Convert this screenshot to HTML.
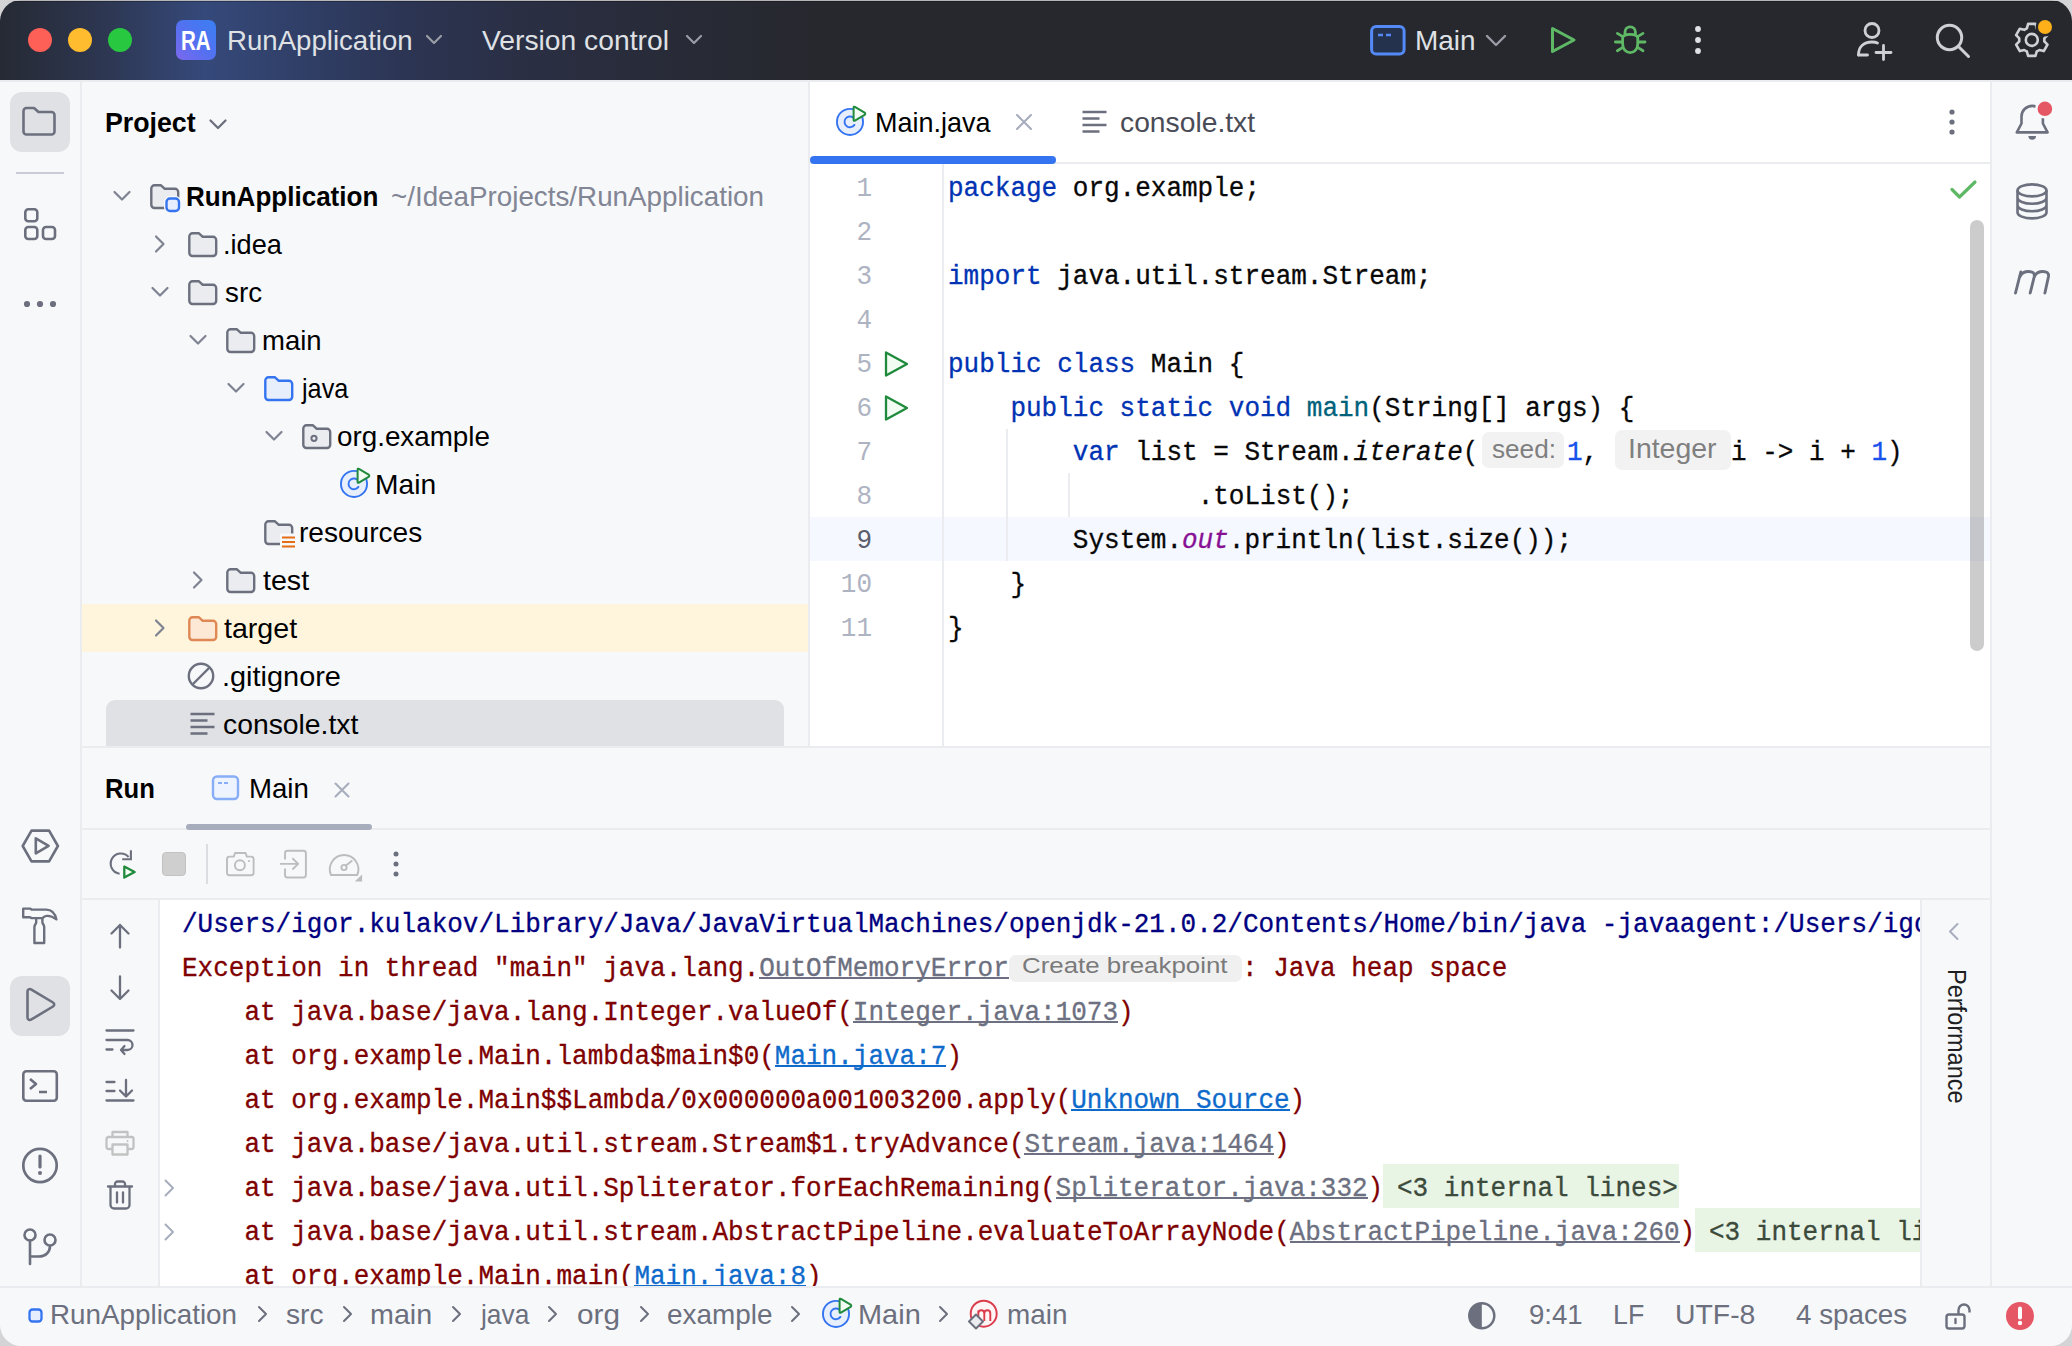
<!DOCTYPE html>
<html><head><meta charset="utf-8"><title>IDE</title>
<style>
*{box-sizing:border-box;margin:0;padding:0}
html,body{width:2072px;height:1346px;overflow:hidden;background:#d4d4d6}
body{font-family:"Liberation Sans",sans-serif;position:relative}
.a{position:absolute}
.win{position:absolute;left:0;top:0;width:2072px;height:1346px;border-radius:21px;overflow:hidden;background:#f7f8fa}
.t{position:absolute;white-space:pre;line-height:1}
svg{position:absolute;overflow:visible}
</style></head><body>
<div class="win">
<div class="a" style="left:0;top:1px;width:2072px;height:79px;background:linear-gradient(90deg,#262a34 0px,#2d3650 100px,#35497a 205px,#31416b 280px,#2c3554 400px,#2a2f44 520px,#282b38 660px,#27282e 820px)"></div>
<div class="a" style="left:0px;top:0px;width:2072px;height:1px;background:#b6b6b8;"></div>
<div class="a" style="left:0px;top:1px;width:2072px;height:1px;background:rgba(0,0,0,0.25);"></div>
<div class="a" style="left:28px;top:28px;width:24px;height:24px;background:#fe5f57;border-radius:50%"></div>
<div class="a" style="left:68px;top:28px;width:24px;height:24px;background:#febc2e;border-radius:50%"></div>
<div class="a" style="left:108px;top:28px;width:24px;height:24px;background:#28c840;border-radius:50%"></div>
<div class="a" style="left:176px;top:20px;width:40px;height:40px;background:linear-gradient(45deg,#7c68ee 0%,#5271f1 50%,#3a7ff2 100%);border-radius:7px"></div>
<div class="t" style="left:180.60px;top:28.00px;font-size:27px;color:#ffffff;font-family:'Liberation Sans',sans-serif;font-weight:700;transform:scaleX(0.7627);transform-origin:0 0;">RA</div>
<div class="t" style="left:227.03px;top:27.00px;font-size:28px;color:#dfe1e5;font-family:'Liberation Sans',sans-serif;transform:scaleX(0.9859);transform-origin:0 0;">RunApplication</div>
<svg style="left:425px;top:34px" width="18" height="11" viewBox="0 0 18 11"><path d="M2 2 L9 9 L16 2" fill="none" stroke="#9a9da5" stroke-width="2.2" stroke-linecap="round" stroke-linejoin="round"/></svg>
<div class="t" style="left:481.90px;top:27.00px;font-size:28px;color:#dfe1e5;font-family:'Liberation Sans',sans-serif;transform:scaleX(1.0093);transform-origin:0 0;">Version control</div>
<svg style="left:685px;top:34px" width="18" height="11" viewBox="0 0 18 11"><path d="M2 2 L9 9 L16 2" fill="none" stroke="#9a9da5" stroke-width="2.2" stroke-linecap="round" stroke-linejoin="round"/></svg>
<svg style="left:1370px;top:25px" width="36" height="31" viewBox="0 0 36 31"><rect x="1.6" y="1.6" width="32.5" height="27.5" rx="4.5" fill="#25324d" stroke="#548af7" stroke-width="3"/><path d="M8 10h5M16 10h5" stroke="#548af7" stroke-width="2.6"/></svg>
<div class="t" style="left:1415.00px;top:27.00px;font-size:28px;color:#dfe1e5;font-family:'Liberation Sans',sans-serif;transform:scaleX(0.9982);transform-origin:0 0;">Main</div>
<svg style="left:1485px;top:34px" width="22" height="13" viewBox="0 0 22 13"><path d="M2 2 L11 11 L20 2" fill="none" stroke="#9a9da5" stroke-width="2.4" stroke-linecap="round" stroke-linejoin="round"/></svg>
<svg style="left:1549px;top:25px" width="28" height="30" viewBox="0 0 28 30"><path d="M3.5 3.5 L25 15 L3.5 26.5 Z" fill="none" stroke="#5fb865" stroke-width="3" stroke-linejoin="round"/></svg>
<svg style="left:1606px;top:18px" width="50" height="44" viewBox="0 0 50 44"><g fill="none" stroke="#5fb865" stroke-width="2.8" stroke-linecap="round" stroke-linejoin="round"><path d="M16.6 20.5 C16.6 16.8 19.8 16.3 24.2 16.3 C28.6 16.3 31.8 16.8 31.8 20.5 V25.5 C31.8 31 28.5 34.6 24.2 34.6 C19.9 34.6 16.6 31 16.6 25.5 Z"/><path d="M19 16.6 V14 A5.2 5.2 0 0 1 29.4 14 V16.6"/><path d="M9.4 24H16.4M32 24H39M11.4 15.4 L16.4 18.4M37 15.4 L32 18.4M11.4 32.7 L16.4 29.6M37 32.7 L32 29.6"/></g></svg>
<svg style="left:1690px;top:24px" width="16" height="32" viewBox="0 0 16 32"><circle cx="8" cy="5" r="2.9" fill="#dfe1e5"/><circle cx="8" cy="16" r="2.9" fill="#dfe1e5"/><circle cx="8" cy="27" r="2.9" fill="#dfe1e5"/></svg>
<svg style="left:1855px;top:21px" width="40" height="40" viewBox="0 0 40 40"><g fill="none" stroke="#ced0d6" stroke-width="2.8" stroke-linecap="round"><circle cx="17" cy="9.5" r="7"/><path d="M3.5 34 c0-8 5-13 13.5-13 c2.2 0 4 0.3 5.5 1"/><path d="M3.5 34h9"/><path d="M28.5 24.5v14M21 31.5h15"/></g></svg>
<svg style="left:1934px;top:22px" width="40" height="40" viewBox="0 0 40 40"><g fill="none" stroke="#ced0d6" stroke-width="3" stroke-linecap="round"><circle cx="15.5" cy="15.5" r="12.2"/><path d="M25 25 L34.5 34.5"/></g></svg>
<svg style="left:2012px;top:0px" width="48" height="60" viewBox="0 0 48 60"><path d="M16.11 23.92L23.49 23.92L24.72 28.30Q26.10 28.99 27.38 29.84L31.79 28.72L35.48 35.11L32.31 38.36Q32.40 39.90 32.31 41.44L35.48 44.69L31.79 51.08L27.38 49.96Q26.10 50.81 24.72 51.50L23.49 55.88L16.11 55.88L14.88 51.50Q13.50 50.81 12.22 49.96L7.81 51.08L4.12 44.69L7.29 41.44Q7.20 39.90 7.29 38.36L4.12 35.11L7.81 28.72L12.22 29.84Q13.50 28.99 14.88 28.30L16.11 23.92Z" fill="none" stroke="#ced0d6" stroke-width="2.6" stroke-linejoin="round"/><circle cx="19.8" cy="39.9" r="6" fill="none" stroke="#ced0d6" stroke-width="2.6"/><circle cx="33" cy="27" r="9.5" fill="#27282e"/><circle cx="33" cy="27" r="7" fill="#fdb01a"/></svg>
<div class="a" style="left:0px;top:80px;width:2072px;height:2px;background:#ebecf0;"></div>
<div class="a" style="left:80px;top:80px;width:2px;height:1207px;background:#ebecf0;"></div>
<div class="a" style="left:808px;top:82px;width:2px;height:665px;background:#ebecf0;"></div>
<div class="a" style="left:810px;top:82px;width:1180px;height:665px;background:#ffffff;"></div>
<div class="a" style="left:1990px;top:80px;width:2px;height:1207px;background:#ebecf0;"></div>
<div class="a" style="left:82px;top:746px;width:1908px;height:2px;background:#ebecf0;"></div>
<div class="a" style="left:82px;top:828px;width:1908px;height:2px;background:#ebecf0;"></div>
<div class="a" style="left:82px;top:898px;width:1908px;height:2px;background:#ebecf0;"></div>
<div class="a" style="left:158px;top:900px;width:2px;height:387px;background:#ebecf0;"></div>
<div class="a" style="left:160px;top:900px;width:1760px;height:387px;background:#ffffff;"></div>
<div class="a" style="left:1920px;top:900px;width:2px;height:387px;background:#ebecf0;"></div>
<div class="a" style="left:0px;top:1286px;width:2072px;height:2px;background:#ebecf0;"></div>
<div class="a" style="left:810px;top:162px;width:1180px;height:2px;background:#ebecf0;"></div>
<div class="a" style="left:10px;top:92px;width:60px;height:60px;background:#dfe1e5;border-radius:12px"></div>
<svg style="left:20px;top:105px" width="40" height="36" viewBox="0 0 40 36"><path d="M3.5 6 a3 3 0 0 1 3-3 h7.5 l4.5 4 h13 a3 3 0 0 1 3 3 v16.5 a3 3 0 0 1 -3 3 h-25 a3 3 0 0 1 -3 -3 z" fill="none" stroke="#6c707e" stroke-width="2.6" stroke-linejoin="round"/></svg>
<div class="a" style="left:16px;top:172px;width:48px;height:2px;background:#c9ccd6;"></div>
<svg style="left:22px;top:206px" width="36" height="36" viewBox="0 0 36 36"><g fill="none" stroke="#6c707e" stroke-width="2.6"><rect x="3.3" y="3.3" width="12" height="12" rx="3"/><rect x="3.3" y="21" width="12" height="12" rx="3"/><rect x="21" y="21" width="12" height="12" rx="3"/></g></svg>
<svg style="left:20px;top:296px" width="40" height="16" viewBox="0 0 40 16"><circle cx="7" cy="8" r="3.1" fill="#6c707e"/><circle cx="20" cy="8" r="3.1" fill="#6c707e"/><circle cx="33" cy="8" r="3.1" fill="#6c707e"/></svg>
<svg style="left:20px;top:826px" width="40" height="40" viewBox="0 0 40 40"><g fill="none" stroke="#6c707e" stroke-width="2.6" stroke-linejoin="round"><path d="M11.5 4.6h17.6l8.8 15.4-8.8 15.4h-17.6l-8.8-15.4z"/><path d="M15.8 12.3 L28.6 19.8 L15.8 27.3z"/></g></svg>
<svg style="left:20px;top:904px" width="40" height="42" viewBox="0 0 40 42"><g fill="none" stroke="#6c707e" stroke-width="2.4" stroke-linejoin="round"><path d="M3.2 4.6H10L11.5 5.6H26.2C31 5.6 35 9 36.4 15.4C33 12.8 29.5 11.6 26.7 11.9C25 12.1 23.5 13.1 22.4 14.1H11.5L10 13.3H3.2Z"/><path d="M16.2 14.1V18.5C16.2 19.5 14.4 21 14.4 23V39H24.2V23C24.2 21 22.4 19.5 22.4 18.5V14.1"/></g></svg>
<div class="a" style="left:10px;top:976px;width:60px;height:60px;background:#dfe1e5;border-radius:12px"></div>
<svg style="left:20px;top:986px" width="40" height="40" viewBox="0 0 40 40"><path d="M7.5 5.5 c0-2 2-3 3.5-2.2 L33 16.5 c1.6 1 1.6 3 0 4 L11 33.7 c-1.5 0.8-3.5-0.2-3.5-2.2z" fill="none" stroke="#6c707e" stroke-width="2.6" stroke-linejoin="round"/></svg>
<svg style="left:20px;top:1068px" width="40" height="36" viewBox="0 0 40 36"><g fill="none" stroke="#6c707e" stroke-width="2.6" stroke-linejoin="round"><rect x="3.3" y="3.3" width="33.5" height="29.5" rx="3"/><path d="M10 11l6 5 -6 5M19 24h8"/></g></svg>
<svg style="left:20px;top:1145px" width="40" height="40" viewBox="0 0 40 40"><circle cx="20" cy="20.5" r="16.7" fill="none" stroke="#6c707e" stroke-width="2.7"/><path d="M20 11v11" stroke="#6c707e" stroke-width="3.2" stroke-linecap="round"/><circle cx="20" cy="28" r="2" fill="#6c707e"/></svg>
<svg style="left:20px;top:1226px" width="40" height="40" viewBox="0 0 40 40"><g fill="none" stroke="#6c707e" stroke-width="2.6" stroke-linecap="round"><circle cx="10" cy="9" r="5.5"/><circle cx="30" cy="14" r="5.5"/><path d="M10 14.5v23.5M10 30.5h9c6 0 11-4 11-10.5"/></g></svg>
<div class="t" style="left:105.19px;top:109.00px;font-size:28px;color:#000000;font-family:'Liberation Sans',sans-serif;font-weight:700;transform:scaleX(0.9547);transform-origin:0 0;">Project</div>
<svg style="left:208px;top:118px" width="20" height="13" viewBox="0 0 20 13"><path d="M2.5 2.5 L10 10 L17.5 2.5" fill="none" stroke="#6c707e" stroke-width="2.3" stroke-linecap="round" stroke-linejoin="round"/></svg>
<div class="a" style="left:82px;top:604px;width:726px;height:48px;background:#fff5dc;"></div>
<div class="a" style="left:106px;top:700px;width:678px;height:46px;background:#dfe1e5;border-radius:9px 9px 0 0"></div>
<svg style="left:112px;top:189px" width="20" height="14" viewBox="0 0 20 14"><path d="M2.5 3 L10 10.5 L17.5 3" fill="none" stroke="#7f8391" stroke-width="2.2" stroke-linecap="round" stroke-linejoin="round"/></svg>
<svg style="left:150px;top:184px" width="30" height="26" viewBox="0 0 30 26"><path d="M1.3 4.5 a3.2 3.2 0 0 1 3.2-3.2 h6.5 l3.8 3.5 h10.2 a3.2 3.2 0 0 1 3.2 3.2 v12.8 a3.2 3.2 0 0 1 -3.2 3.2 h-20.5 a3.2 3.2 0 0 1 -3.2 -3.2 z" fill="#ebecf0" stroke="#6c707e" stroke-width="2.4" stroke-linejoin="round"/></svg>
<svg style="left:164px;top:196px" width="18" height="18" viewBox="0 0 18 18"><rect x="2.5" y="2.5" width="12.5" height="12.5" rx="3.5" fill="#e6eefe" stroke="#f7f8fa" stroke-width="5"/><rect x="2.5" y="2.5" width="12.5" height="12.5" rx="3.5" fill="#e6eefe" stroke="#3574f0" stroke-width="2.4"/></svg>
<div class="t" style="left:186.03px;top:183.00px;font-size:28px;color:#000000;font-family:'Liberation Sans',sans-serif;font-weight:700;transform:scaleX(0.9297);transform-origin:0 0;">RunApplication</div>
<div class="t" style="left:390.61px;top:183.00px;font-size:28px;color:#818594;font-family:'Liberation Sans',sans-serif;transform:scaleX(0.9922);transform-origin:0 0;">~/IdeaProjects/RunApplication</div>
<svg style="left:153px;top:234px" width="14" height="20" viewBox="0 0 14 20"><path d="M3 2.5 L10.5 10 L3 17.5" fill="none" stroke="#7f8391" stroke-width="2.2" stroke-linecap="round" stroke-linejoin="round"/></svg>
<svg style="left:188px;top:232px" width="30" height="26" viewBox="0 0 30 26"><path d="M1.3 4.5 a3.2 3.2 0 0 1 3.2-3.2 h6.5 l3.8 3.5 h10.2 a3.2 3.2 0 0 1 3.2 3.2 v12.8 a3.2 3.2 0 0 1 -3.2 3.2 h-20.5 a3.2 3.2 0 0 1 -3.2 -3.2 z" fill="#ebecf0" stroke="#6c707e" stroke-width="2.4" stroke-linejoin="round"/></svg>
<div class="t" style="left:223.07px;top:231.00px;font-size:28px;color:#000000;font-family:'Liberation Sans',sans-serif;transform:scaleX(0.9708);transform-origin:0 0;">.idea</div>
<svg style="left:150px;top:285px" width="20" height="14" viewBox="0 0 20 14"><path d="M2.5 3 L10 10.5 L17.5 3" fill="none" stroke="#7f8391" stroke-width="2.2" stroke-linecap="round" stroke-linejoin="round"/></svg>
<svg style="left:188px;top:280px" width="30" height="26" viewBox="0 0 30 26"><path d="M1.3 4.5 a3.2 3.2 0 0 1 3.2-3.2 h6.5 l3.8 3.5 h10.2 a3.2 3.2 0 0 1 3.2 3.2 v12.8 a3.2 3.2 0 0 1 -3.2 3.2 h-20.5 a3.2 3.2 0 0 1 -3.2 -3.2 z" fill="#ebecf0" stroke="#6c707e" stroke-width="2.4" stroke-linejoin="round"/></svg>
<div class="t" style="left:224.71px;top:279.00px;font-size:28px;color:#000000;font-family:'Liberation Sans',sans-serif;transform:scaleX(0.9916);transform-origin:0 0;">src</div>
<svg style="left:188px;top:333px" width="20" height="14" viewBox="0 0 20 14"><path d="M2.5 3 L10 10.5 L17.5 3" fill="none" stroke="#7f8391" stroke-width="2.2" stroke-linecap="round" stroke-linejoin="round"/></svg>
<svg style="left:226px;top:328px" width="30" height="26" viewBox="0 0 30 26"><path d="M1.3 4.5 a3.2 3.2 0 0 1 3.2-3.2 h6.5 l3.8 3.5 h10.2 a3.2 3.2 0 0 1 3.2 3.2 v12.8 a3.2 3.2 0 0 1 -3.2 3.2 h-20.5 a3.2 3.2 0 0 1 -3.2 -3.2 z" fill="#ebecf0" stroke="#6c707e" stroke-width="2.4" stroke-linejoin="round"/></svg>
<div class="t" style="left:261.63px;top:327.00px;font-size:28px;color:#000000;font-family:'Liberation Sans',sans-serif;transform:scaleX(0.9825);transform-origin:0 0;">main</div>
<svg style="left:226px;top:381px" width="20" height="14" viewBox="0 0 20 14"><path d="M2.5 3 L10 10.5 L17.5 3" fill="none" stroke="#7f8391" stroke-width="2.2" stroke-linecap="round" stroke-linejoin="round"/></svg>
<svg style="left:264px;top:376px" width="30" height="26" viewBox="0 0 30 26"><path d="M1.3 4.5 a3.2 3.2 0 0 1 3.2-3.2 h6.5 l3.8 3.5 h10.2 a3.2 3.2 0 0 1 3.2 3.2 v12.8 a3.2 3.2 0 0 1 -3.2 3.2 h-20.5 a3.2 3.2 0 0 1 -3.2 -3.2 z" fill="#e7effd" stroke="#3574f0" stroke-width="2.4" stroke-linejoin="round"/></svg>
<div class="t" style="left:301.63px;top:375.00px;font-size:28px;color:#000000;font-family:'Liberation Sans',sans-serif;transform:scaleX(0.9021);transform-origin:0 0;">java</div>
<svg style="left:264px;top:429px" width="20" height="14" viewBox="0 0 20 14"><path d="M2.5 3 L10 10.5 L17.5 3" fill="none" stroke="#7f8391" stroke-width="2.2" stroke-linecap="round" stroke-linejoin="round"/></svg>
<svg style="left:302px;top:424px" width="30" height="26" viewBox="0 0 30 26"><path d="M1.3 4.5 a3.2 3.2 0 0 1 3.2-3.2 h6.5 l3.8 3.5 h10.2 a3.2 3.2 0 0 1 3.2 3.2 v12.8 a3.2 3.2 0 0 1 -3.2 3.2 h-20.5 a3.2 3.2 0 0 1 -3.2 -3.2 z" fill="#ebecf0" stroke="#6c707e" stroke-width="2.4" stroke-linejoin="round"/></svg>
<svg style="left:302px;top:424px" width="30" height="26" viewBox="0 0 30 26"><circle cx="12" cy="14.3" r="2.6" fill="none" stroke="#6c707e" stroke-width="2"/></svg>
<div class="t" style="left:337.31px;top:423.00px;font-size:28px;color:#000000;font-family:'Liberation Sans',sans-serif;transform:scaleX(0.9927);transform-origin:0 0;">org.example</div>
<svg style="left:339px;top:466px" width="32" height="32" viewBox="0 0 32 32"><circle cx="15" cy="17.9" r="13.05" fill="#e7effd" stroke="#3574f0" stroke-width="1.9"/><path d="M19.4 20.9 A5.4 5.4 0 1 1 18.4 13.7" fill="none" stroke="#3574f0" stroke-width="1.9" stroke-linecap="round"/><path d="M18.6 3.6 Q18.6 2.2 19.9 2.9 L29.6 8.6 Q30.9 9.75 29.6 10.9 L19.9 16.6 Q18.6 17.3 18.6 15.9z" fill="#f2fcf3" stroke="#208a3c" stroke-width="2" stroke-linejoin="round"/></svg>
<div class="t" style="left:374.68px;top:471.00px;font-size:28px;color:#000000;font-family:'Liberation Sans',sans-serif;transform:scaleX(1.0071);transform-origin:0 0;">Main</div>
<svg style="left:264px;top:520px" width="30" height="26" viewBox="0 0 30 26"><path d="M1.3 4.5 a3.2 3.2 0 0 1 3.2-3.2 h6.5 l3.8 3.5 h10.2 a3.2 3.2 0 0 1 3.2 3.2 v12.8 a3.2 3.2 0 0 1 -3.2 3.2 h-20.5 a3.2 3.2 0 0 1 -3.2 -3.2 z" fill="#ebecf0" stroke="#6c707e" stroke-width="2.4" stroke-linejoin="round"/></svg>
<svg style="left:264px;top:520px" width="34" height="30" viewBox="0 0 34 30"><rect x="16" y="13.5" width="17" height="14" fill="#f7f8fa"/><path d="M18 17.5h13M18 22h13M18 26.5h13" stroke="#e66d17" stroke-width="2.2"/></svg>
<div class="t" style="left:298.80px;top:519.00px;font-size:28px;color:#000000;font-family:'Liberation Sans',sans-serif;transform:scaleX(1.0025);transform-origin:0 0;">resources</div>
<svg style="left:191px;top:570px" width="14" height="20" viewBox="0 0 14 20"><path d="M3 2.5 L10.5 10 L3 17.5" fill="none" stroke="#7f8391" stroke-width="2.2" stroke-linecap="round" stroke-linejoin="round"/></svg>
<svg style="left:226px;top:568px" width="30" height="26" viewBox="0 0 30 26"><path d="M1.3 4.5 a3.2 3.2 0 0 1 3.2-3.2 h6.5 l3.8 3.5 h10.2 a3.2 3.2 0 0 1 3.2 3.2 v12.8 a3.2 3.2 0 0 1 -3.2 3.2 h-20.5 a3.2 3.2 0 0 1 -3.2 -3.2 z" fill="#ebecf0" stroke="#6c707e" stroke-width="2.4" stroke-linejoin="round"/></svg>
<div class="t" style="left:262.59px;top:567.00px;font-size:28px;color:#000000;font-family:'Liberation Sans',sans-serif;transform:scaleX(1.0224);transform-origin:0 0;">test</div>
<svg style="left:153px;top:618px" width="14" height="20" viewBox="0 0 14 20"><path d="M3 2.5 L10.5 10 L3 17.5" fill="none" stroke="#7f8391" stroke-width="2.2" stroke-linecap="round" stroke-linejoin="round"/></svg>
<svg style="left:188px;top:616px" width="30" height="26" viewBox="0 0 30 26"><path d="M1.3 4.5 a3.2 3.2 0 0 1 3.2-3.2 h6.5 l3.8 3.5 h10.2 a3.2 3.2 0 0 1 3.2 3.2 v12.8 a3.2 3.2 0 0 1 -3.2 3.2 h-20.5 a3.2 3.2 0 0 1 -3.2 -3.2 z" fill="#fde8d6" stroke="#e08855" stroke-width="2.4" stroke-linejoin="round"/></svg>
<div class="t" style="left:224.19px;top:615.00px;font-size:28px;color:#000000;font-family:'Liberation Sans',sans-serif;transform:scaleX(1.0211);transform-origin:0 0;">target</div>
<svg style="left:186px;top:661px" width="32" height="32" viewBox="0 0 32 32"><circle cx="15" cy="15" r="12.2" fill="none" stroke="#6c707e" stroke-width="2.4"/><path d="M7 23 L23 7" stroke="#6c707e" stroke-width="2.4"/></svg>
<div class="t" style="left:222.02px;top:663.00px;font-size:28px;color:#000000;font-family:'Liberation Sans',sans-serif;transform:scaleX(1.0323);transform-origin:0 0;">.gitignore</div>
<svg style="left:188px;top:710px" width="30" height="28" viewBox="0 0 30 28"><path d="M2.5 4h24M2.5 10.5h17M2.5 17h24M2.5 23.5h17" stroke="#6c707e" stroke-width="2.4"/></svg>
<div class="t" style="left:223.39px;top:711.00px;font-size:28px;color:#000000;font-family:'Liberation Sans',sans-serif;transform:scaleX(1.0113);transform-origin:0 0;">console.txt</div>
<svg style="left:835px;top:104px" width="32" height="32" viewBox="0 0 32 32"><circle cx="15" cy="17.9" r="13.05" fill="#e7effd" stroke="#3574f0" stroke-width="1.9"/><path d="M19.4 20.9 A5.4 5.4 0 1 1 18.4 13.7" fill="none" stroke="#3574f0" stroke-width="1.9" stroke-linecap="round"/><path d="M18.6 3.6 Q18.6 2.2 19.9 2.9 L29.6 8.6 Q30.9 9.75 29.6 10.9 L19.9 16.6 Q18.6 17.3 18.6 15.9z" fill="#f2fcf3" stroke="#208a3c" stroke-width="2" stroke-linejoin="round"/></svg>
<div class="t" style="left:875.48px;top:109.00px;font-size:28px;color:#000000;font-family:'Liberation Sans',sans-serif;transform:scaleX(0.9634);transform-origin:0 0;">Main.java</div>
<svg style="left:1014px;top:112px" width="20" height="20" viewBox="0 0 20 20"><path d="M3 3 L17 17 M17 3 L3 17" stroke="#a8adbd" stroke-width="2.1" stroke-linecap="round"/></svg>
<svg style="left:1080px;top:108px" width="30" height="28" viewBox="0 0 30 28"><path d="M2.5 4h24M2.5 10.5h17M2.5 17h24M2.5 23.5h17" stroke="#6c707e" stroke-width="2.4"/></svg>
<div class="t" style="left:1119.79px;top:109.00px;font-size:28px;color:#494b57;font-family:'Liberation Sans',sans-serif;transform:scaleX(1.0091);transform-origin:0 0;">console.txt</div>
<div class="a" style="left:810px;top:156px;width:246px;height:8px;background:#3574f0;border-radius:4px"></div>
<svg style="left:1940px;top:102px" width="24" height="40" viewBox="0 0 24 40"><circle cx="12" cy="10" r="2.6" fill="#6c707e"/><circle cx="12" cy="20" r="2.6" fill="#6c707e"/><circle cx="12" cy="30" r="2.6" fill="#6c707e"/></svg>
<div class="a" style="left:810px;top:517px;width:1180px;height:44px;background:#f5f8fe;"></div>
<div class="a" style="left:942px;top:164px;width:2px;height:583px;background:#ebecf0;"></div>
<div class="a" style="left:1006px;top:429px;width:2px;height:132px;background:#ebecf0;"></div>
<div class="a" style="left:1068px;top:473px;width:2px;height:44px;background:#ebecf0;"></div>
<div class="t" style="left:856.40px;top:176.00px;font-size:26px;color:#aeb3c2;font-family:'Liberation Mono',monospace;transform:scaleY(1.06);transform-origin:0 20px;-webkit-text-stroke:0px currentColor;">1</div>
<div class="t" style="left:856.40px;top:220.00px;font-size:26px;color:#aeb3c2;font-family:'Liberation Mono',monospace;transform:scaleY(1.06);transform-origin:0 20px;-webkit-text-stroke:0px currentColor;">2</div>
<div class="t" style="left:856.40px;top:264.00px;font-size:26px;color:#aeb3c2;font-family:'Liberation Mono',monospace;transform:scaleY(1.06);transform-origin:0 20px;-webkit-text-stroke:0px currentColor;">3</div>
<div class="t" style="left:856.40px;top:308.00px;font-size:26px;color:#aeb3c2;font-family:'Liberation Mono',monospace;transform:scaleY(1.06);transform-origin:0 20px;-webkit-text-stroke:0px currentColor;">4</div>
<div class="t" style="left:856.40px;top:352.00px;font-size:26px;color:#aeb3c2;font-family:'Liberation Mono',monospace;transform:scaleY(1.06);transform-origin:0 20px;-webkit-text-stroke:0px currentColor;">5</div>
<div class="t" style="left:856.40px;top:396.00px;font-size:26px;color:#aeb3c2;font-family:'Liberation Mono',monospace;transform:scaleY(1.06);transform-origin:0 20px;-webkit-text-stroke:0px currentColor;">6</div>
<div class="t" style="left:856.40px;top:440.00px;font-size:26px;color:#aeb3c2;font-family:'Liberation Mono',monospace;transform:scaleY(1.06);transform-origin:0 20px;-webkit-text-stroke:0px currentColor;">7</div>
<div class="t" style="left:856.40px;top:484.00px;font-size:26px;color:#aeb3c2;font-family:'Liberation Mono',monospace;transform:scaleY(1.06);transform-origin:0 20px;-webkit-text-stroke:0px currentColor;">8</div>
<div class="t" style="left:856.40px;top:528.00px;font-size:26px;color:#5a5d6b;font-family:'Liberation Mono',monospace;transform:scaleY(1.06);transform-origin:0 20px;-webkit-text-stroke:0px currentColor;">9</div>
<div class="t" style="left:840.80px;top:572.00px;font-size:26px;color:#aeb3c2;font-family:'Liberation Mono',monospace;transform:scaleY(1.06);transform-origin:0 20px;-webkit-text-stroke:0px currentColor;">10</div>
<div class="t" style="left:840.80px;top:616.00px;font-size:26px;color:#aeb3c2;font-family:'Liberation Mono',monospace;transform:scaleY(1.06);transform-origin:0 20px;-webkit-text-stroke:0px currentColor;">11</div>
<div class="t" style="left:948.00px;top:176.00px;font-size:26px;color:#0033b3;font-family:'Liberation Mono',monospace;transform:scaleY(1.06);transform-origin:0 20px;-webkit-text-stroke:0.3px currentColor;">package</div>
<div class="t" style="left:1057.20px;top:176.00px;font-size:26px;color:#080808;font-family:'Liberation Mono',monospace;transform:scaleY(1.06);transform-origin:0 20px;-webkit-text-stroke:0.3px currentColor;"> org.example;</div>
<div class="t" style="left:948.00px;top:264.00px;font-size:26px;color:#0033b3;font-family:'Liberation Mono',monospace;transform:scaleY(1.06);transform-origin:0 20px;-webkit-text-stroke:0.3px currentColor;">import</div>
<div class="t" style="left:1041.60px;top:264.00px;font-size:26px;color:#080808;font-family:'Liberation Mono',monospace;transform:scaleY(1.06);transform-origin:0 20px;-webkit-text-stroke:0.3px currentColor;"> java.util.stream.Stream;</div>
<div class="t" style="left:948.00px;top:352.00px;font-size:26px;color:#0033b3;font-family:'Liberation Mono',monospace;transform:scaleY(1.06);transform-origin:0 20px;-webkit-text-stroke:0.3px currentColor;">public</div>
<div class="t" style="left:1057.20px;top:352.00px;font-size:26px;color:#0033b3;font-family:'Liberation Mono',monospace;transform:scaleY(1.06);transform-origin:0 20px;-webkit-text-stroke:0.3px currentColor;">class</div>
<div class="t" style="left:1135.20px;top:352.00px;font-size:26px;color:#080808;font-family:'Liberation Mono',monospace;transform:scaleY(1.06);transform-origin:0 20px;-webkit-text-stroke:0.3px currentColor;"> Main {</div>
<div class="t" style="left:1010.40px;top:396.00px;font-size:26px;color:#0033b3;font-family:'Liberation Mono',monospace;transform:scaleY(1.06);transform-origin:0 20px;-webkit-text-stroke:0.3px currentColor;">public</div>
<div class="t" style="left:1119.60px;top:396.00px;font-size:26px;color:#0033b3;font-family:'Liberation Mono',monospace;transform:scaleY(1.06);transform-origin:0 20px;-webkit-text-stroke:0.3px currentColor;">static</div>
<div class="t" style="left:1228.80px;top:396.00px;font-size:26px;color:#0033b3;font-family:'Liberation Mono',monospace;transform:scaleY(1.06);transform-origin:0 20px;-webkit-text-stroke:0.3px currentColor;">void</div>
<div class="t" style="left:1306.80px;top:396.00px;font-size:26px;color:#00627a;font-family:'Liberation Mono',monospace;transform:scaleY(1.06);transform-origin:0 20px;-webkit-text-stroke:0.3px currentColor;">main</div>
<div class="t" style="left:1369.20px;top:396.00px;font-size:26px;color:#080808;font-family:'Liberation Mono',monospace;transform:scaleY(1.06);transform-origin:0 20px;-webkit-text-stroke:0.3px currentColor;">(String[] args) {</div>
<div class="t" style="left:1072.80px;top:440.00px;font-size:26px;color:#0033b3;font-family:'Liberation Mono',monospace;transform:scaleY(1.06);transform-origin:0 20px;-webkit-text-stroke:0.3px currentColor;">var</div>
<div class="t" style="left:1119.60px;top:440.00px;font-size:26px;color:#080808;font-family:'Liberation Mono',monospace;transform:scaleY(1.06);transform-origin:0 20px;-webkit-text-stroke:0.3px currentColor;"> list = Stream.</div>
<div class="t" style="left:1353.60px;top:440.00px;font-size:26px;color:#080808;font-family:'Liberation Mono',monospace;font-style:italic;transform:scaleY(1.06);transform-origin:0 20px;-webkit-text-stroke:0.3px currentColor;">iterate</div>
<div class="t" style="left:1462.80px;top:440.00px;font-size:26px;color:#080808;font-family:'Liberation Mono',monospace;transform:scaleY(1.06);transform-origin:0 20px;-webkit-text-stroke:0.3px currentColor;">(</div>
<div class="a" style="left:1482px;top:432px;width:82px;height:35.5px;background:#f2f2f3;border-radius:7px"></div>
<div class="t" style="left:1491.85px;top:437.00px;font-size:25px;color:#7f7f7f;font-family:'Liberation Sans',sans-serif;transform:scaleX(1.0460);transform-origin:0 0;">seed:</div>
<div class="t" style="left:1567.00px;top:440.00px;font-size:26px;color:#1750eb;font-family:'Liberation Mono',monospace;transform:scaleY(1.06);transform-origin:0 20px;-webkit-text-stroke:0.3px currentColor;">1</div>
<div class="t" style="left:1582.60px;top:440.00px;font-size:26px;color:#080808;font-family:'Liberation Mono',monospace;transform:scaleY(1.06);transform-origin:0 20px;-webkit-text-stroke:0.3px currentColor;">,</div>
<div class="a" style="left:1615px;top:430px;width:116px;height:40px;background:#f2f2f3;border-radius:7px"></div>
<div class="t" style="left:1627.86px;top:435.00px;font-size:28px;color:#7f7f7f;font-family:'Liberation Sans',sans-serif;transform:scaleX(1.0155);transform-origin:0 0;">Integer</div>
<div class="t" style="left:1731.00px;top:440.00px;font-size:26px;color:#080808;font-family:'Liberation Mono',monospace;transform:scaleY(1.06);transform-origin:0 20px;-webkit-text-stroke:0.3px currentColor;">i -&gt; i + </div>
<div class="t" style="left:1871.40px;top:440.00px;font-size:26px;color:#1750eb;font-family:'Liberation Mono',monospace;transform:scaleY(1.06);transform-origin:0 20px;-webkit-text-stroke:0.3px currentColor;">1</div>
<div class="t" style="left:1887.00px;top:440.00px;font-size:26px;color:#080808;font-family:'Liberation Mono',monospace;transform:scaleY(1.06);transform-origin:0 20px;-webkit-text-stroke:0.3px currentColor;">)</div>
<div class="t" style="left:948.00px;top:484.00px;font-size:26px;color:#080808;font-family:'Liberation Mono',monospace;transform:scaleY(1.06);transform-origin:0 20px;-webkit-text-stroke:0.3px currentColor;">                .toList();</div>
<div class="t" style="left:948.00px;top:528.00px;font-size:26px;color:#080808;font-family:'Liberation Mono',monospace;transform:scaleY(1.06);transform-origin:0 20px;-webkit-text-stroke:0.3px currentColor;">        System.</div>
<div class="t" style="left:1182.00px;top:528.00px;font-size:26px;color:#871094;font-family:'Liberation Mono',monospace;font-style:italic;transform:scaleY(1.06);transform-origin:0 20px;-webkit-text-stroke:0.3px currentColor;">out</div>
<div class="t" style="left:1228.80px;top:528.00px;font-size:26px;color:#080808;font-family:'Liberation Mono',monospace;transform:scaleY(1.06);transform-origin:0 20px;-webkit-text-stroke:0.3px currentColor;">.println(list.size());</div>
<div class="t" style="left:948.00px;top:572.00px;font-size:26px;color:#080808;font-family:'Liberation Mono',monospace;transform:scaleY(1.06);transform-origin:0 20px;-webkit-text-stroke:0.3px currentColor;">    }</div>
<div class="t" style="left:948.00px;top:616.00px;font-size:26px;color:#080808;font-family:'Liberation Mono',monospace;transform:scaleY(1.06);transform-origin:0 20px;-webkit-text-stroke:0.3px currentColor;">}</div>
<svg style="left:882px;top:349px" width="28" height="30" viewBox="0 0 28 30"><path d="M4 3.5 L25 15 L4 26.5z" fill="#f2fcf3" stroke="#208a3c" stroke-width="2.3" stroke-linejoin="round"/></svg>
<svg style="left:882px;top:393px" width="28" height="30" viewBox="0 0 28 30"><path d="M4 3.5 L25 15 L4 26.5z" fill="#f2fcf3" stroke="#208a3c" stroke-width="2.3" stroke-linejoin="round"/></svg>
<svg style="left:1948px;top:178px" width="32" height="24" viewBox="0 0 32 24"><path d="M4 11.5 L11.5 19 L27 4" fill="none" stroke="#5fb865" stroke-width="3.2" stroke-linecap="round" stroke-linejoin="round"/></svg>
<div class="a" style="left:1970px;top:220px;width:14px;height:431px;background:rgba(0,0,0,0.2);border-radius:7px"></div>
<svg style="left:2010px;top:98px" width="46" height="46" viewBox="0 0 46 46"><path d="M6.8 34.4 L11.5 25.5 V18.6 A10.7 10.7 0 0 1 32.9 18.6 V25.5 L37.6 34.4 Z" fill="none" stroke="#6c707e" stroke-width="2.6" stroke-linejoin="round"/><path d="M18.4 38 a3.8 3.8 0 0 0 7.6 0z" fill="#6c707e"/><circle cx="34.9" cy="10.8" r="9.8" fill="#f7f8fa"/><circle cx="34.9" cy="10.8" r="7.3" fill="#e55765"/></svg>
<svg style="left:2014px;top:182px" width="38" height="40" viewBox="0 0 38 40"><g fill="none" stroke="#6c707e" stroke-width="2.6"><ellipse cx="18" cy="8.4" rx="14.5" ry="6"/><path d="M3.5 8.4v22c0 3.3 6.5 6 14.5 6s14.5-2.7 14.5-6v-22M3.5 15.8c0 3.3 6.5 6 14.5 6s14.5-2.7 14.5-6M3.5 23.2c0 3.3 6.5 6 14.5 6s14.5-2.7 14.5-6"/></g></svg>
<svg style="left:2010px;top:266px" width="44" height="32" viewBox="0 0 44 32"><g fill="none" stroke="#6c707e" stroke-width="2.9" stroke-linecap="round" stroke-linejoin="round"><path d="M5.5 27 L10.8 6"/><path d="M10.3 10 C12 6.8 15 5.5 18.5 5.5 C22.5 5.5 24.8 7 24.3 10.5 L20.2 27"/><path d="M24.6 10 C26.3 6.8 29.3 5.5 32.8 5.5 C36.8 5.5 39 7 38.5 10.5 L34.9 27"/></g></svg>
<div class="t" style="left:105.46px;top:775.00px;font-size:28px;color:#000000;font-family:'Liberation Sans',sans-serif;font-weight:700;transform:scaleX(0.9154);transform-origin:0 0;">Run</div>
<svg style="left:210px;top:774px" width="32" height="28" viewBox="0 0 32 28"><rect x="3" y="2.5" width="25" height="22.5" rx="4" fill="#edf3ff" stroke="#88adf7" stroke-width="2.4"/><path d="M8 9h4M14 9h4" stroke="#88adf7" stroke-width="2.2"/></svg>
<div class="t" style="left:249.33px;top:775.00px;font-size:28px;color:#000000;font-family:'Liberation Sans',sans-serif;transform:scaleX(0.9859);transform-origin:0 0;">Main</div>
<svg style="left:332px;top:780px" width="20" height="20" viewBox="0 0 20 20"><path d="M3.5 3.5 L16.5 16.5 M16.5 3.5 L3.5 16.5" stroke="#a8adbd" stroke-width="2.1" stroke-linecap="round"/></svg>
<div class="a" style="left:186px;top:824px;width:186px;height:6px;background:#a8adbd;border-radius:3px"></div>
<svg style="left:100px;top:842px" width="44" height="44" viewBox="0 0 44 44"><g fill="none" stroke="#6c707e" stroke-width="2.1"><path d="M28.6 15 A10.2 10.2 0 1 0 19.6 31.8"/><path d="M30.9 8.2V17.2H22.2"/></g><path d="M24.3 24.6 L34.6 30.1 L24.3 35.6z" fill="#f2fcf3" stroke="#208a3c" stroke-width="2.3" stroke-linejoin="round"/></svg>
<div class="a" style="left:162px;top:852px;width:24px;height:24px;background:#cfcfcf;border-radius:4px;border:1.5px solid #c2c2c2"></div>
<div class="a" style="left:206px;top:844px;width:2px;height:40px;background:#dcdde1;"></div>
<svg style="left:220px;top:842px" width="150" height="46" viewBox="0 0 150 46"><g fill="none" stroke="#bdbdbd" stroke-width="1.9" stroke-linejoin="round" stroke-linecap="butt"><path d="M9.5 14.6h4.3l1.2-3.6h10.6l1.2 3.6h4.3a2.5 2.5 0 0 1 2.5 2.5v13.7a2.5 2.5 0 0 1-2.5 2.5h-21.6a2.5 2.5 0 0 1-2.5-2.5v-13.7a2.5 2.5 0 0 1 2.5-2.5z"/><circle cx="19.9" cy="23.3" r="5"/><path d="M65 17.4v-6.2a2.5 2.5 0 0 1 2.5-2.5h15.9a2.5 2.5 0 0 1 2.5 2.5v21.8a2.5 2.5 0 0 1-2.5 2.5h-15.9a2.5 2.5 0 0 1-2.5-2.5v-6.5"/><path d="M60 21.9h18.5M72.4 16.3l5.8 5.6-5.8 5.6"/><path d="M111 33 a14.3 14.3 0 1 1 26.2 0z"/><circle cx="124" cy="25.5" r="2.6"/><path d="M126 23.6l6.3-5"/></g><circle cx="29" cy="19" r="1.1" fill="#bdbdbd"/><path d="M134.7 39.6h7.4v-7z" fill="#bdbdbd"/></svg>
<svg style="left:388px;top:850px" width="16" height="28" viewBox="0 0 16 28"><circle cx="8" cy="4" r="2.5" fill="#6c707e"/><circle cx="8" cy="14" r="2.5" fill="#6c707e"/><circle cx="8" cy="24" r="2.5" fill="#6c707e"/></svg>
<svg style="left:106px;top:920px" width="28" height="32" viewBox="0 0 28 32"><g fill="none" stroke="#6c707e" stroke-width="2.3" stroke-linecap="round" stroke-linejoin="round"><path d="M14 27.5v-22.5M5.5 13.5l8.5-8.5 8.5 8.5"/></g></svg>
<svg style="left:106px;top:972px" width="28" height="32" viewBox="0 0 28 32"><g fill="none" stroke="#6c707e" stroke-width="2.3" stroke-linecap="round" stroke-linejoin="round"><path d="M14 4.5v22.5M5.5 18.5l8.5 8.5 8.5-8.5"/></g></svg>
<svg style="left:104px;top:1026px" width="32" height="32" viewBox="0 0 32 32"><g fill="none" stroke="#6c707e" stroke-width="2.3" stroke-linecap="round" stroke-linejoin="round"><path d="M2.5 4.5h27M2.5 14h21a5 5 0 0 1 0 10h-6M2.5 23.5h6M20.5 20l-3.5 4 3.5 4"/></g></svg>
<svg style="left:104px;top:1078px" width="32" height="28" viewBox="0 0 32 28"><g fill="none" stroke="#6c707e" stroke-width="2.3" stroke-linecap="round" stroke-linejoin="round"><path d="M2.5 4h8M2.5 13h8M2.5 22.5h27M22 2v16.5M16 12.5l6 6 6-6"/></g></svg>
<svg style="left:104px;top:1129px" width="32" height="30" viewBox="0 0 32 30"><g fill="none" stroke="#c2c2c2" stroke-width="2.3" stroke-linejoin="round"><path d="M8.5 8v-5h15v5"/><path d="M8.5 20h-4a2 2 0 0 1-2-2v-8a2 2 0 0 1 2-2h23a2 2 0 0 1 2 2v8a2 2 0 0 1-2 2h-4"/><path d="M8.5 15.5h15v10h-15z"/></g><circle cx="23.5" cy="12" r="1" fill="#c2c2c2"/></svg>
<svg style="left:104px;top:1179px" width="32" height="34" viewBox="0 0 32 34"><g fill="none" stroke="#6c707e" stroke-width="2.3" stroke-linecap="round" stroke-linejoin="round"><path d="M4 7.5h24M11 7.5v-2.5a2.5 2.5 0 0 1 2.5-2.5h5a2.5 2.5 0 0 1 2.5 2.5v2.5M6.5 7.5v18.5a3.5 3.5 0 0 0 3.5 3.5h12a3.5 3.5 0 0 0 3.5-3.5v-18.5M13 13.5v10M19 13.5v10"/></g></svg>
<svg style="left:162px;top:1178px" width="16" height="20" viewBox="0 0 16 20"><path d="M3.5 2.5 L11 10 L3.5 17.5" fill="none" stroke="#a8adbd" stroke-width="2" stroke-linecap="round" stroke-linejoin="round"/></svg>
<svg style="left:162px;top:1222px" width="16" height="20" viewBox="0 0 16 20"><path d="M3.5 2.5 L11 10 L3.5 17.5" fill="none" stroke="#a8adbd" stroke-width="2" stroke-linecap="round" stroke-linejoin="round"/></svg>
<div class="a" style="left:160px;top:900px;width:1760px;height:386px;overflow:hidden">
<div class="t" style="left:22.00px;top:12.00px;font-size:26px;color:#000080;font-family:'Liberation Mono',monospace;transform:scaleY(1.06);transform-origin:0 20px;-webkit-text-stroke:0.3px currentColor;">/Users/igor.kulakov/Library/Java/JavaVirtualMachines/openjdk-21.0.2/Contents/Home/bin/java -javaagent:/Users/igor.kulakov/Applications</div>
<div class="t" style="left:22.00px;top:56.00px;font-size:26px;color:#7f0000;font-family:'Liberation Mono',monospace;transform:scaleY(1.06);transform-origin:0 20px;-webkit-text-stroke:0.3px currentColor;">Exception in thread "main" java.lang.</div>
<div class="a" style="left:599.20px;top:77px;width:249.60px;height:2px;background:#6c7080;"></div>
<div class="t" style="left:599.20px;top:56.00px;font-size:26px;color:#6c7080;font-family:'Liberation Mono',monospace;transform:scaleY(1.06);transform-origin:0 20px;-webkit-text-stroke:0.3px currentColor;">OutOfMemoryError</div>
<div class="a" style="left:848.5px;top:54.5px;width:233.5px;height:27px;background:#f0f0f1;border-radius:7px"></div>
<div class="t" style="left:861.71px;top:55.00px;font-size:22px;color:#7a7a7a;font-family:'Liberation Sans',sans-serif;transform:scaleX(1.1748);transform-origin:0 0;">Create breakpoint</div>
<div class="t" style="left:1082.00px;top:56.00px;font-size:26px;color:#7f0000;font-family:'Liberation Mono',monospace;transform:scaleY(1.06);transform-origin:0 20px;-webkit-text-stroke:0.3px currentColor;">: Java heap space</div>
<div class="t" style="left:22.00px;top:100.00px;font-size:26px;color:#7f0000;font-family:'Liberation Mono',monospace;transform:scaleY(1.06);transform-origin:0 20px;-webkit-text-stroke:0.3px currentColor;">    at java.base/java.lang.Integer.valueOf(</div>
<div class="a" style="left:692.80px;top:121px;width:265.20px;height:2px;background:#6c7080;"></div>
<div class="t" style="left:692.80px;top:100.00px;font-size:26px;color:#6c7080;font-family:'Liberation Mono',monospace;transform:scaleY(1.06);transform-origin:0 20px;-webkit-text-stroke:0.3px currentColor;">Integer.java:1073</div>
<div class="t" style="left:958.00px;top:100.00px;font-size:26px;color:#7f0000;font-family:'Liberation Mono',monospace;transform:scaleY(1.06);transform-origin:0 20px;-webkit-text-stroke:0.3px currentColor;">)</div>
<div class="t" style="left:22.00px;top:144.00px;font-size:26px;color:#7f0000;font-family:'Liberation Mono',monospace;transform:scaleY(1.06);transform-origin:0 20px;-webkit-text-stroke:0.3px currentColor;">    at org.example.Main.lambda$main$0(</div>
<div class="a" style="left:614.80px;top:165px;width:171.60px;height:2px;background:#0f6bcb;"></div>
<div class="t" style="left:614.80px;top:144.00px;font-size:26px;color:#0f6bcb;font-family:'Liberation Mono',monospace;transform:scaleY(1.06);transform-origin:0 20px;-webkit-text-stroke:0.3px currentColor;">Main.java:7</div>
<div class="t" style="left:786.40px;top:144.00px;font-size:26px;color:#7f0000;font-family:'Liberation Mono',monospace;transform:scaleY(1.06);transform-origin:0 20px;-webkit-text-stroke:0.3px currentColor;">)</div>
<div class="t" style="left:22.00px;top:188.00px;font-size:26px;color:#7f0000;font-family:'Liberation Mono',monospace;transform:scaleY(1.06);transform-origin:0 20px;-webkit-text-stroke:0.3px currentColor;">    at org.example.Main$$Lambda/0x000000a001003200.apply(</div>
<div class="a" style="left:911.20px;top:209px;width:218.40px;height:2px;background:#0f6bcb;"></div>
<div class="t" style="left:911.20px;top:188.00px;font-size:26px;color:#0f6bcb;font-family:'Liberation Mono',monospace;transform:scaleY(1.06);transform-origin:0 20px;-webkit-text-stroke:0.3px currentColor;">Unknown Source</div>
<div class="t" style="left:1129.60px;top:188.00px;font-size:26px;color:#7f0000;font-family:'Liberation Mono',monospace;transform:scaleY(1.06);transform-origin:0 20px;-webkit-text-stroke:0.3px currentColor;">)</div>
<div class="t" style="left:22.00px;top:232.00px;font-size:26px;color:#7f0000;font-family:'Liberation Mono',monospace;transform:scaleY(1.06);transform-origin:0 20px;-webkit-text-stroke:0.3px currentColor;">    at java.base/java.util.stream.Stream$1.tryAdvance(</div>
<div class="a" style="left:864.40px;top:253px;width:249.60px;height:2px;background:#6c7080;"></div>
<div class="t" style="left:864.40px;top:232.00px;font-size:26px;color:#6c7080;font-family:'Liberation Mono',monospace;transform:scaleY(1.06);transform-origin:0 20px;-webkit-text-stroke:0.3px currentColor;">Stream.java:1464</div>
<div class="t" style="left:1114.00px;top:232.00px;font-size:26px;color:#7f0000;font-family:'Liberation Mono',monospace;transform:scaleY(1.06);transform-origin:0 20px;-webkit-text-stroke:0.3px currentColor;">)</div>
<div class="t" style="left:22.00px;top:276.00px;font-size:26px;color:#7f0000;font-family:'Liberation Mono',monospace;transform:scaleY(1.06);transform-origin:0 20px;-webkit-text-stroke:0.3px currentColor;">    at java.base/java.util.Spliterator.forEachRemaining(</div>
<div class="a" style="left:895.60px;top:297px;width:312.00px;height:2px;background:#6c7080;"></div>
<div class="t" style="left:895.60px;top:276.00px;font-size:26px;color:#6c7080;font-family:'Liberation Mono',monospace;transform:scaleY(1.06);transform-origin:0 20px;-webkit-text-stroke:0.3px currentColor;">Spliterator.java:332</div>
<div class="t" style="left:1207.60px;top:276.00px;font-size:26px;color:#7f0000;font-family:'Liberation Mono',monospace;transform:scaleY(1.06);transform-origin:0 20px;-webkit-text-stroke:0.3px currentColor;">)</div>
<div class="a" style="left:1223px;top:264px;width:296px;height:44px;background:#e8f4e4;"></div>
<div class="t" style="left:1237.00px;top:276.00px;font-size:26px;color:#3b4a3b;font-family:'Liberation Mono',monospace;transform:scaleY(1.06);transform-origin:0 20px;-webkit-text-stroke:0.3px currentColor;">&lt;3 internal lines&gt;</div>
<div class="t" style="left:22.00px;top:320.00px;font-size:26px;color:#7f0000;font-family:'Liberation Mono',monospace;transform:scaleY(1.06);transform-origin:0 20px;-webkit-text-stroke:0.3px currentColor;">    at java.base/java.util.stream.AbstractPipeline.evaluateToArrayNode(</div>
<div class="a" style="left:1129.60px;top:341px;width:390.00px;height:2px;background:#6c7080;"></div>
<div class="t" style="left:1129.60px;top:320.00px;font-size:26px;color:#6c7080;font-family:'Liberation Mono',monospace;transform:scaleY(1.06);transform-origin:0 20px;-webkit-text-stroke:0.3px currentColor;">AbstractPipeline.java:260</div>
<div class="t" style="left:1519.60px;top:320.00px;font-size:26px;color:#7f0000;font-family:'Liberation Mono',monospace;transform:scaleY(1.06);transform-origin:0 20px;-webkit-text-stroke:0.3px currentColor;">)</div>
<div class="a" style="left:1535px;top:308px;width:400px;height:44px;background:#e8f4e4;"></div>
<div class="t" style="left:1549.00px;top:320.00px;font-size:26px;color:#3b4a3b;font-family:'Liberation Mono',monospace;transform:scaleY(1.06);transform-origin:0 20px;-webkit-text-stroke:0.3px currentColor;">&lt;3 internal lines&gt;</div>
<div class="t" style="left:22.00px;top:364.00px;font-size:26px;color:#7f0000;font-family:'Liberation Mono',monospace;transform:scaleY(1.06);transform-origin:0 20px;-webkit-text-stroke:0.3px currentColor;">    at org.example.Main.main(</div>
<div class="a" style="left:474.40px;top:385px;width:171.60px;height:2px;background:#0f6bcb;"></div>
<div class="t" style="left:474.40px;top:364.00px;font-size:26px;color:#0f6bcb;font-family:'Liberation Mono',monospace;transform:scaleY(1.06);transform-origin:0 20px;-webkit-text-stroke:0.3px currentColor;">Main.java:8</div>
<div class="t" style="left:646.00px;top:364.00px;font-size:26px;color:#7f0000;font-family:'Liberation Mono',monospace;transform:scaleY(1.06);transform-origin:0 20px;-webkit-text-stroke:0.3px currentColor;">)</div>
</div>
<svg style="left:1944px;top:921px" width="20" height="22" viewBox="0 0 20 22"><path d="M13.5 3 L6 10.5 L13.5 18" fill="none" stroke="#a8adbd" stroke-width="2" stroke-linecap="round" stroke-linejoin="round"/></svg>
<div class="t" style="left:1968.6px;top:969.07px;font-size:25px;color:#1e1f22;transform:rotate(90deg) scaleX(0.9406);transform-origin:0 0;font-family:'Liberation Sans',sans-serif">Performance</div>
<svg style="left:27px;top:1307px" width="18" height="18" viewBox="0 0 18 18"><rect x="2.5" y="2.5" width="12" height="12" rx="3" fill="#e6eefe" stroke="#3574f0" stroke-width="2.3"/></svg>
<div class="t" style="left:49.72px;top:1301.00px;font-size:28px;color:#6c707e;font-family:'Liberation Sans',sans-serif;transform:scaleX(0.9929);transform-origin:0 0;">RunApplication</div>
<svg style="left:256px;top:1304px" width="14" height="20" viewBox="0 0 14 20"><path d="M3 3 L10 10 L3 17" fill="none" stroke="#6c707e" stroke-width="2" stroke-linecap="round" stroke-linejoin="round"/></svg>
<svg style="left:341px;top:1304px" width="14" height="20" viewBox="0 0 14 20"><path d="M3 3 L10 10 L3 17" fill="none" stroke="#6c707e" stroke-width="2" stroke-linecap="round" stroke-linejoin="round"/></svg>
<svg style="left:449.5px;top:1304px" width="14" height="20" viewBox="0 0 14 20"><path d="M3 3 L10 10 L3 17" fill="none" stroke="#6c707e" stroke-width="2" stroke-linecap="round" stroke-linejoin="round"/></svg>
<svg style="left:546px;top:1304px" width="14" height="20" viewBox="0 0 14 20"><path d="M3 3 L10 10 L3 17" fill="none" stroke="#6c707e" stroke-width="2" stroke-linecap="round" stroke-linejoin="round"/></svg>
<svg style="left:638px;top:1304px" width="14" height="20" viewBox="0 0 14 20"><path d="M3 3 L10 10 L3 17" fill="none" stroke="#6c707e" stroke-width="2" stroke-linecap="round" stroke-linejoin="round"/></svg>
<svg style="left:789px;top:1304px" width="14" height="20" viewBox="0 0 14 20"><path d="M3 3 L10 10 L3 17" fill="none" stroke="#6c707e" stroke-width="2" stroke-linecap="round" stroke-linejoin="round"/></svg>
<svg style="left:937px;top:1304px" width="14" height="20" viewBox="0 0 14 20"><path d="M3 3 L10 10 L3 17" fill="none" stroke="#6c707e" stroke-width="2" stroke-linecap="round" stroke-linejoin="round"/></svg>
<div class="t" style="left:285.90px;top:1301.00px;font-size:28px;color:#6c707e;font-family:'Liberation Sans',sans-serif;transform:scaleX(1.0056);transform-origin:0 0;">src</div>
<div class="t" style="left:369.65px;top:1301.00px;font-size:28px;color:#6c707e;font-family:'Liberation Sans',sans-serif;transform:scaleX(1.0246);transform-origin:0 0;">main</div>
<div class="t" style="left:480.66px;top:1301.00px;font-size:28px;color:#6c707e;font-family:'Liberation Sans',sans-serif;transform:scaleX(0.9405);transform-origin:0 0;">java</div>
<div class="t" style="left:577.43px;top:1301.00px;font-size:28px;color:#6c707e;font-family:'Liberation Sans',sans-serif;transform:scaleX(1.0613);transform-origin:0 0;">org</div>
<div class="t" style="left:666.80px;top:1301.00px;font-size:28px;color:#6c707e;font-family:'Liberation Sans',sans-serif;transform:scaleX(0.9961);transform-origin:0 0;">example</div>
<svg style="left:821px;top:1296px" width="32" height="32" viewBox="0 0 32 32"><circle cx="15" cy="17.9" r="13.05" fill="#e7effd" stroke="#3574f0" stroke-width="1.9"/><path d="M19.4 20.9 A5.4 5.4 0 1 1 18.4 13.7" fill="none" stroke="#3574f0" stroke-width="1.9" stroke-linecap="round"/><path d="M18.6 3.6 Q18.6 2.2 19.9 2.9 L29.6 8.6 Q30.9 9.75 29.6 10.9 L19.9 16.6 Q18.6 17.3 18.6 15.9z" fill="#f2fcf3" stroke="#208a3c" stroke-width="2" stroke-linejoin="round"/></svg>
<div class="t" style="left:857.62px;top:1301.00px;font-size:28px;color:#6c707e;font-family:'Liberation Sans',sans-serif;transform:scaleX(1.0336);transform-origin:0 0;">Main</div>
<svg style="left:966px;top:1296px" width="36" height="36" viewBox="0 0 36 36"><circle cx="17.7" cy="17.7" r="13" fill="#fff5f5" stroke="#db3b4b" stroke-width="1.9"/><path d="M12.3 25V14.5M12.3 17.5c0-2 1.3-3.2 3-3.2s3 1.2 3 3.2V25M18.3 17.5c0-2 1.3-3.2 3-3.2s3 1.2 3 3.2V25" fill="none" stroke="#db3b4b" stroke-width="1.9"/><path d="M10 18.5 L17 25.5 L10 32.5 L3 25.5z" fill="#ebecf0" stroke="#6c707e" stroke-width="2" stroke-linejoin="round"/></svg>
<div class="t" style="left:1006.81px;top:1301.00px;font-size:28px;color:#6c707e;font-family:'Liberation Sans',sans-serif;transform:scaleX(0.9965);transform-origin:0 0;">main</div>
<svg style="left:1466px;top:1300px" width="32" height="32" viewBox="0 0 32 32"><circle cx="15.8" cy="15.8" r="12.5" fill="none" stroke="#6c707e" stroke-width="2.5"/><path d="M15.8 3.3 a12.5 12.5 0 0 0 0 25z" fill="#6c707e"/></svg>
<div class="t" style="left:1529.42px;top:1301.00px;font-size:28px;color:#6c707e;font-family:'Liberation Sans',sans-serif;transform:scaleX(0.9846);transform-origin:0 0;">9:41</div>
<div class="t" style="left:1612.80px;top:1301.00px;font-size:28px;color:#6c707e;font-family:'Liberation Sans',sans-serif;transform:scaleX(0.9556);transform-origin:0 0;">LF</div>
<div class="t" style="left:1674.77px;top:1301.00px;font-size:28px;color:#6c707e;font-family:'Liberation Sans',sans-serif;transform:scaleX(1.0132);transform-origin:0 0;">UTF-8</div>
<div class="t" style="left:1796.40px;top:1301.00px;font-size:28px;color:#6c707e;font-family:'Liberation Sans',sans-serif;transform:scaleX(0.9919);transform-origin:0 0;">4 spaces</div>
<svg style="left:1944px;top:1302px" width="30" height="30" viewBox="0 0 30 30"><g fill="none" stroke="#6c707e" stroke-width="2.4" stroke-linejoin="round"><rect x="2.5" y="12.5" width="18" height="14" rx="2.5"/><path d="M14.5 12.5v-4.5a5.5 5.5 0 0 1 11 0v2.5"/></g><path d="M11.5 17v4" stroke="#6c707e" stroke-width="2.4" stroke-linecap="round"/></svg>
<svg style="left:2004px;top:1300px" width="32" height="32" viewBox="0 0 32 32"><circle cx="16" cy="16" r="14" fill="#e55765"/><path d="M16 8.5v9" stroke="#fff" stroke-width="4" stroke-linecap="round"/><circle cx="16" cy="23" r="2.2" fill="#fff"/></svg>
</div>
</body></html>
